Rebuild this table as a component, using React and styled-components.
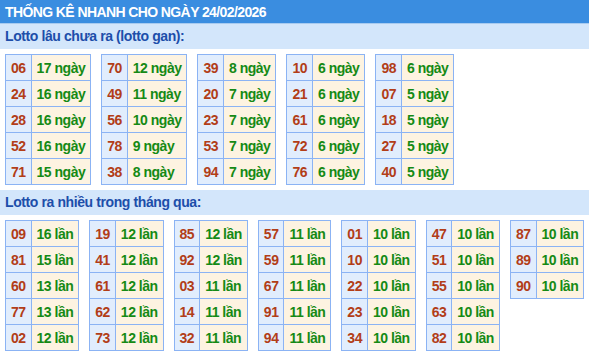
import React from "react";
import styled, { createGlobalStyle } from "styled-components";

const Global = createGlobalStyle`
  html, body { margin: 0; padding: 0; background: #fff; }
  body { font-family: "Liberation Sans", Arial, sans-serif; }
`;

const Page = styled.div`
  width: 589px;
  height: 356px;
  overflow: hidden;
  background: #fff;
`;

const TitleBar = styled.div`
  height: 23px;
  line-height: 24px;
  background: #3a8de0;
  border-bottom: 1px solid #a8cbf0;
  color: #fff;
  font-weight: bold;
  font-size: 14px;
  letter-spacing: -0.6px;
  padding-left: 5px;
  white-space: nowrap;
`;

const SectionTitle = styled.div`
  height: 25px;
  line-height: 25px;
  background: #d3e6fb;
  color: #1d4eaa;
  font-weight: bold;
  font-size: 14px;
  letter-spacing: -0.4px;
  padding-left: 5px;
  margin-top: ${(p) => (p.$gap ? "5px" : "0")};
`;

const Tables = styled.div`
  display: flex;
  align-items: flex-start;
  gap: 10px;
  padding: 5px 5px 0;
`;

const Table = styled.table`
  border-collapse: collapse;
  font-size: 14px;
  font-weight: bold;
  letter-spacing: -0.5px;
`;

const Cell = styled.td`
  border: 1px solid #8bb3f4;
  height: 25px;
  padding: 0 5px;
  white-space: nowrap;
  text-align: ${(p) => (p.$num ? "center" : "left")};
  background: ${(p) => (p.$num ? "#e1edfd" : "#fdf3e1")};
  color: ${(p) => (p.$num ? "#b23d18" : "#158a15")};
`;

const gan = [
  [["06", 17], ["24", 16], ["28", 16], ["52", 16], ["71", 15]],
  [["70", 12], ["49", 11], ["56", 10], ["78", 9], ["38", 8]],
  [["39", 8], ["20", 7], ["23", 7], ["53", 7], ["94", 7]],
  [["10", 6], ["21", 6], ["61", 6], ["72", 6], ["76", 6]],
  [["98", 6], ["07", 5], ["18", 5], ["27", 5], ["40", 5]],
];

const nhieu = [
  [["09", 16], ["81", 15], ["60", 13], ["77", 13], ["02", 12]],
  [["19", 12], ["41", 12], ["61", 12], ["62", 12], ["73", 12]],
  [["85", 12], ["92", 12], ["03", 11], ["14", 11], ["32", 11]],
  [["57", 11], ["59", 11], ["67", 11], ["91", 11], ["94", 11]],
  [["01", 10], ["10", 10], ["22", 10], ["23", 10], ["34", 10]],
  [["47", 10], ["51", 10], ["55", 10], ["63", 10], ["82", 10]],
  [["87", 10], ["89", 10], ["90", 10]],
];

function StatTable({ rows, unit }) {
  return (
    <Table>
      <tbody>
        {rows.map(([n, c]) => (
          <tr key={n}>
            <Cell $num>{n}</Cell>
            <Cell>
              {c} {unit}
            </Cell>
          </tr>
        ))}
      </tbody>
    </Table>
  );
}

export default function App() {
  return (
    <Page>
      <Global />
      <TitleBar>THỐNG KÊ NHANH CHO NGÀY 24/02/2026</TitleBar>
      <SectionTitle>Lotto lâu chưa ra (lotto gan):</SectionTitle>
      <Tables>
        {gan.map((rows, i) => (
          <StatTable key={i} rows={rows} unit="ngày" />
        ))}
      </Tables>
      <SectionTitle $gap>Lotto ra nhiều trong tháng qua:</SectionTitle>
      <Tables>
        {nhieu.map((rows, i) => (
          <StatTable key={i} rows={rows} unit="lần" />
        ))}
      </Tables>
    </Page>
  );
}
